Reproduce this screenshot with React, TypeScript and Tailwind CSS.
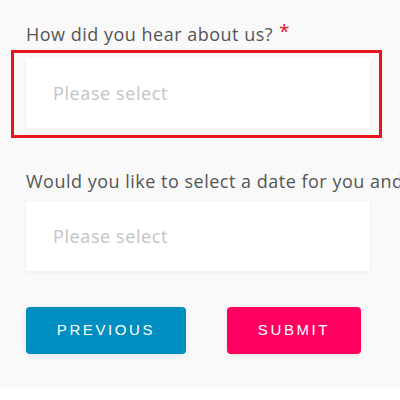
export default function App() {
  return (
    <div className="w-[400px] h-[400px] overflow-hidden bg-white">
      <div className="h-[388px] bg-[#f9f9f9] pt-[22px]" style={{ fontFamily: "'Open Sans', sans-serif" }}>
        <div className="pl-[26px] flex items-start text-[18px] leading-[25px] tracking-[0.5px] text-[#555555] whitespace-nowrap">
          How did you hear about us?
          <span className="ml-[6px] text-[#e8141e] text-[19px] leading-[19px]">*</span>
        </div>
        <div className="mt-[3px] ml-[11px] w-[371px] border-[3px] border-[#e8141e] pt-[5px] pb-[7px] pl-[12px] pr-[9px]">
          <div className="h-[70px] bg-white rounded-[3px] shadow-[0_1px_4px_rgba(0,0,0,0.06)] flex items-center pl-[27px] text-[18px] tracking-[0.6px] text-[#c4c4c4]">
            Please select
          </div>
        </div>
        <div className="mt-[31px] pl-[26px] text-[18px] leading-[25px] tracking-[0.5px] text-[#555555] whitespace-nowrap">
          Would you like to select a date for you and
        </div>
        <div className="mt-[7px] ml-[26px] w-[344px] h-[70px] bg-white rounded-[3px] shadow-[0_1px_4px_rgba(0,0,0,0.06)] flex items-center pl-[27px] text-[18px] tracking-[0.6px] text-[#c4c4c4]">
          Please select
        </div>
        <div className="mt-[36px] pl-[26px] flex gap-[41px]" style={{ fontFamily: "'Liberation Sans', Arial, sans-serif" }}>
          <button className="w-[160px] h-[47px] rounded-[4px] bg-[#008dc2] text-white text-[15px] tracking-[2.6px] uppercase shadow-[0_2px_6px_rgba(0,0,0,0.08)]">
            Previous
          </button>
          <button className="w-[134px] h-[47px] rounded-[4px] bg-[#ff0060] text-white text-[15px] tracking-[2.6px] uppercase shadow-[0_2px_6px_rgba(0,0,0,0.08)]">
            Submit
          </button>
        </div>
      </div>
    </div>
  );
}
